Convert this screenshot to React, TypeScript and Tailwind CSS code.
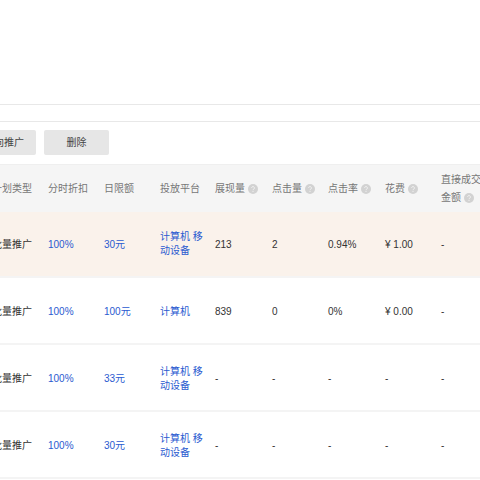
import React from "react"

const font = "font-['Liberation_Sans','Noto_Sans_CJK_SC',sans-serif]"

function Help() {
  return (
    <svg width="10" height="10" viewBox="0 0 10 10" className="ml-[3px] shrink-0">
      <circle cx="5" cy="5" r="5" fill="#d2d2d2" />
      <path d="M3.6 3.9a1.4 1.4 0 1 1 2.2 1.2c-.5.3-.8.6-.8 1.1" fill="none" stroke="#f5f5f5" strokeWidth="0.9" />
      <circle cx="5" cy="7.5" r="0.55" fill="#f5f5f5" />
    </svg>
  )
}

const columns = [
  { label: "计划类型", w: "w-[56px]" },
  { label: "分时折扣", w: "w-[56px]" },
  { label: "日限额", w: "w-[56px]" },
  { label: "投放平台", w: "w-[55px]" },
  { label: "展现量", w: "w-[57px]", help: true },
  { label: "点击量", w: "w-[56px]", help: true },
  { label: "点击率", w: "w-[57px]", help: true },
  { label: "花费", w: "w-[56px]", help: true },
]

const rows = [
  { bg: "bg-[#faf2eb]", h: "h-[66px]", budget: "30元", platform: "计算机 移动设备", show: "213", click: "2", rate: "0.94%", cost: "¥ 1.00" },
  { bg: "bg-white pt-[2px]", h: "h-[67px]", budget: "100元", platform: "计算机", show: "839", click: "0", rate: "0%", cost: "¥ 0.00" },
  { bg: "bg-white pt-[2px]", h: "h-[67px]", budget: "33元", platform: "计算机 移动设备", show: "-", click: "-", rate: "-", cost: "-" },
  { bg: "bg-white pt-[2px]", h: "h-[67px]", budget: "30元", platform: "计算机 移动设备", show: "-", click: "-", rate: "-", cost: "-" },
]

export default function App() {
  return (
    <div className={`w-[480px] h-[480px] overflow-hidden bg-white text-[10px] text-[#333] ${font}`}>
      <div className="h-[105px] border-b border-[#e8e8e8]" />
      <div className="h-[17px] border-b border-[#e8e8e8]" />

      <div className="flex h-[42px] gap-[8px] pt-[8px] -ml-[40px]">
        <button className="w-[76px] h-[25px] rounded-[2px] bg-[#e6e6e6] text-[#444] text-[10px] pl-[12px]">定向推广</button>
        <button className="w-[65px] h-[25px] rounded-[2px] bg-[#e6e6e6] text-[#444] text-[10px]">删除</button>
      </div>

      <div className="-ml-[8px] w-[600px]">
        <div className="flex items-center h-[48px] bg-[#f5f5f5] text-[#777] border-t border-[#efefef]">
          {columns.map((c) => (
            <div key={c.label} className={`flex items-center shrink-0 ${c.w}`}>
              {c.label}
              {c.help && <Help />}
            </div>
          ))}
          <div className="w-[60px] leading-[18px]">
            <div>直接成交</div>
            <div className="flex items-center">金额<Help /></div>
          </div>
        </div>

        {rows.map((r, i) => (
          <div key={i} className={`flex items-center border-b-2 border-[#f4f4f4] ${r.bg} ${r.h}`}>
            <div className="w-[56px] shrink-0">批量推广</div>
            <div className="w-[56px] shrink-0 text-[#2a5ad0]">100%</div>
            <div className="w-[56px] shrink-0 text-[#2a5ad0]">{r.budget}</div>
            <div className="w-[55px] shrink-0 pr-[10px] leading-[14px] text-[#2a5ad0]">{r.platform}</div>
            <div className="w-[57px] shrink-0">{r.show}</div>
            <div className="w-[56px] shrink-0">{r.click}</div>
            <div className="w-[57px] shrink-0">{r.rate}</div>
            <div className="w-[56px] shrink-0">{r.cost}</div>
            <div className="w-[60px] shrink-0">-</div>
          </div>
        ))}
      </div>
    </div>
  )
}
